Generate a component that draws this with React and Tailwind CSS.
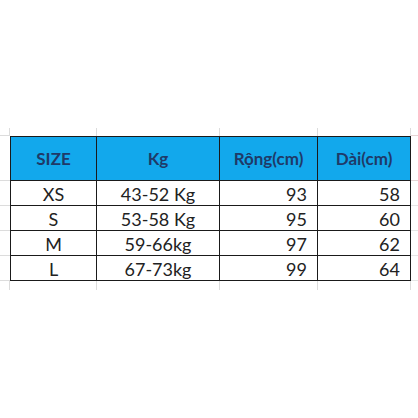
import React from "react";

const sizes = [
  { size: "XS", kg: "43-52 Kg", rong: 93, dai: 58 },
  { size: "S", kg: "53-58 Kg", rong: 95, dai: 60 },
  { size: "M", kg: "59-66kg", rong: 97, dai: 62 },
  { size: "L", kg: "67-73kg", rong: 99, dai: 64 },
];

const headers = ["SIZE", "Kg", "Rộng(cm)", "Dài(cm)"];

// faint spreadsheet gridlines peeking out around the table
const Gutter = ({ className = "" }) => <div className={className} />;

export default function App() {
  return (
    <div
      className="w-[418px] h-[418px] bg-white pt-[128px]"
      style={{ fontFamily: "Lato, 'Open Sans', sans-serif" }}
    >
      <div className="grid grid-cols-[10px_87px_123px_98px_93px_7px] grid-rows-[8px_45px_25px_25px_25px_25px_9px]">
        {/* top gutter row */}
        <Gutter className="border-r border-b border-[#dcdcdc]" />
        <Gutter className="border-r border-[#dcdcdc]" />
        <Gutter className="border-r border-[#dcdcdc]" />
        <Gutter className="border-r border-[#dcdcdc]" />
        <Gutter className="border-r border-[#dcdcdc]" />
        <Gutter className="border-b border-[#e6d6d6]" />

        {/* header */}
        <Gutter className="border-b border-[#dcdcdc]" />
        {headers.map((h, i) => (
          <div
            key={h}
            className={`flex items-center justify-center bg-[#12a8ec] border-t border-r border-b border-[#1a1a1a] text-[17px] font-bold text-[#1f3a68] ${
              i === 0 ? "border-l" : ""
            }`}
          >
            {h}
          </div>
        ))}
        <Gutter className="border-b border-[#e6d6d6]" />

        {/* body rows */}
        {sizes.map((r) => (
          <React.Fragment key={r.size}>
            <Gutter className="border-b border-[#dcdcdc]" />
            <div className="flex items-center justify-center pt-[2px] border-l border-r border-b border-[#1a1a1a] text-[18px] text-[#222]">
              {r.size}
            </div>
            <div className="flex items-center justify-center pt-[2px] border-r border-b border-[#1a1a1a] text-[18px] text-[#222]">
              {r.kg}
            </div>
            <div className="flex items-center justify-end pt-[2px] pr-[10px] border-r border-b border-[#1a1a1a] text-[18px] text-[#222]">
              {r.rong}
            </div>
            <div className="flex items-center justify-end pt-[2px] pr-[10px] border-r border-b border-[#1a1a1a] text-[18px] text-[#222]">
              {r.dai}
            </div>
            <Gutter className="border-b border-[#e6e6e6]" />
          </React.Fragment>
        ))}

        {/* bottom gutter row */}
        <Gutter className="border-r border-[#dcdcdc]" />
        <Gutter className="border-r border-[#dcdcdc]" />
        <Gutter className="border-r border-[#dcdcdc]" />
        <Gutter className="border-r border-[#dcdcdc]" />
        <Gutter className="border-r border-[#dcdcdc]" />
        <Gutter />
      </div>
    </div>
  );
}
